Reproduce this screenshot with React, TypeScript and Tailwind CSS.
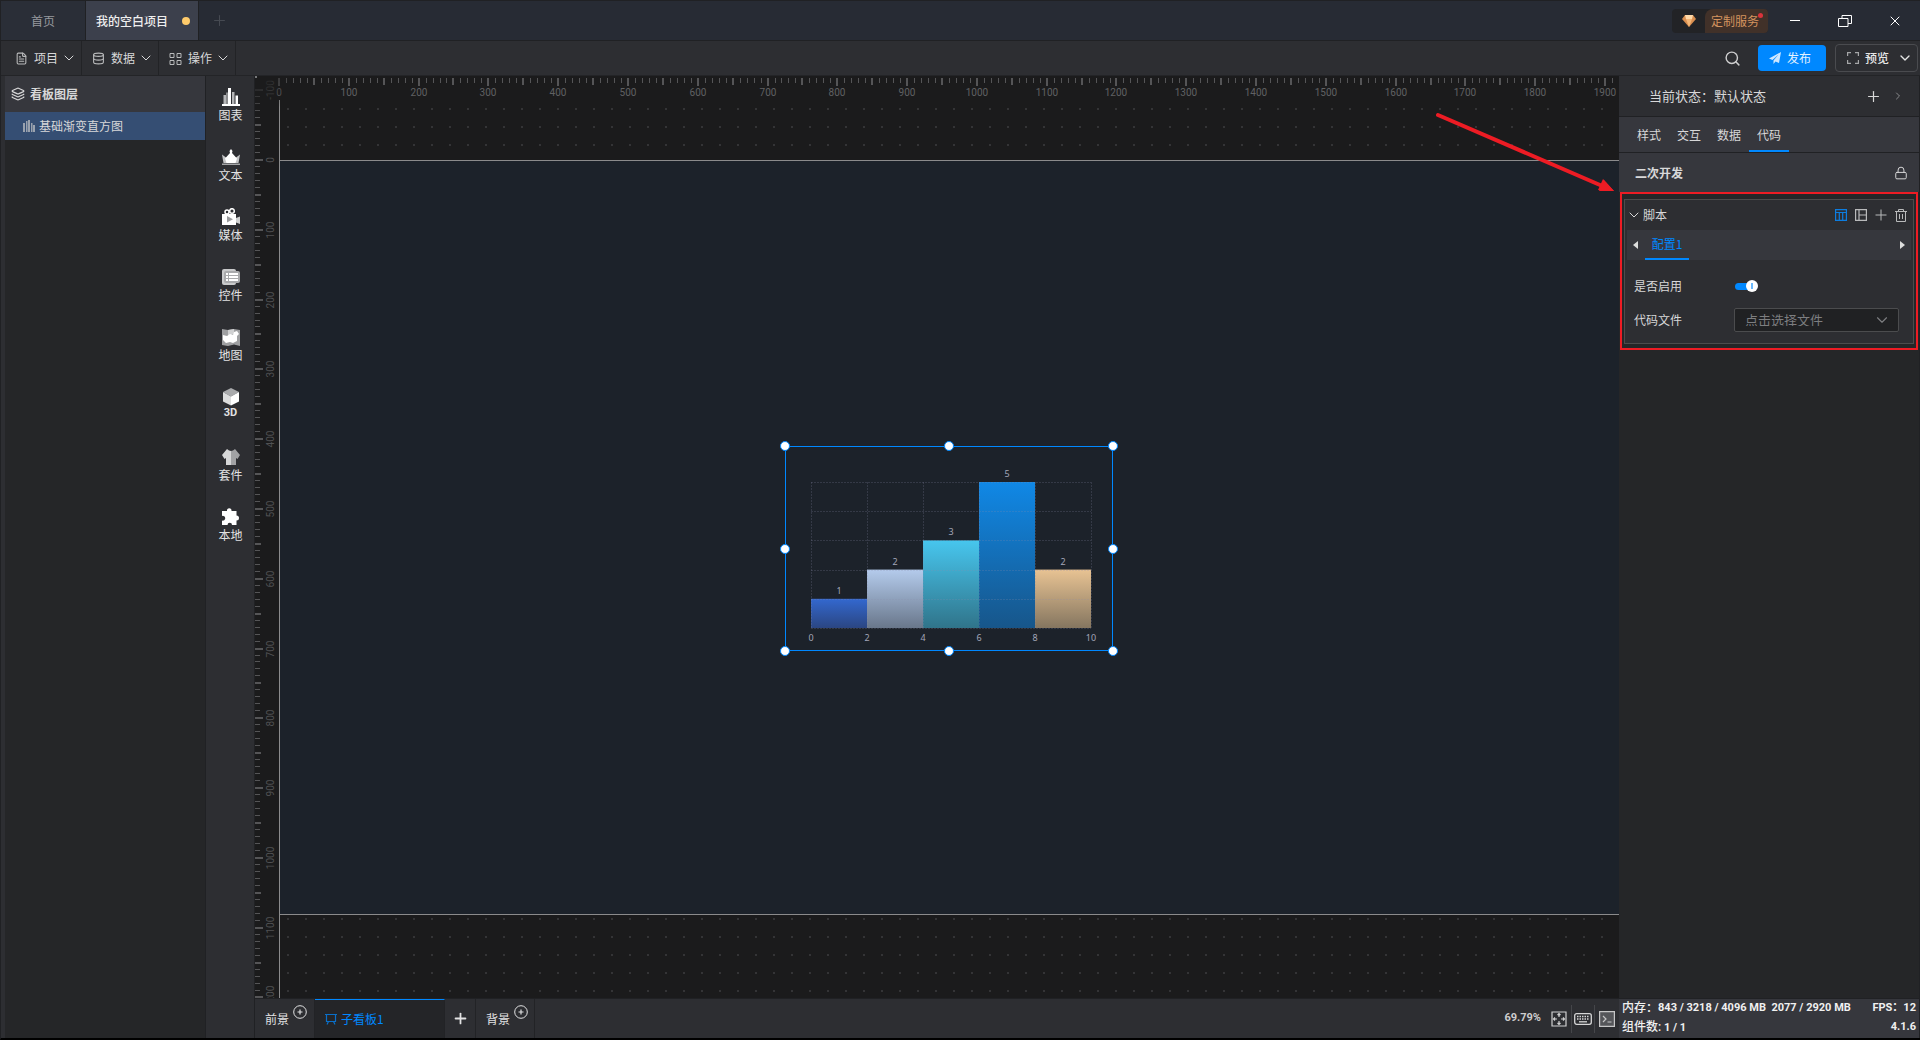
import type { ReactNode } from "react";
import { ChevronDown, ChevronRight, Database, FileText, Layers, Lock, Plus, Search, X } from "lucide-react";

const SCALE = 0.6979;

const menus = [
  { label: "项目", icon: <FileText size={13} strokeWidth={2} /> },
  { label: "数据", icon: <Database size={13} strokeWidth={2} /> },
  { label: "操作", icon: <GridIcon /> },
];

const tools: { label: string; icon: ReactNode }[] = [
  {
    label: "图表",
    icon: (
      <>
        <path d="M1.5 7h2.500v9h-2.500zM10 4h2.500v12h-2.500z" fill="#b5b6b8" />
        <path d="M4 4.500h2v11.500h-2z" fill="#8a8b8d" />
        <path d="M6 0h3v16h-3zM13.500 7.500h2.500v8.500h-2.500zM0 16h18v2h-18z" fill="#fff" />
      </>
    ),
  },
  {
    label: "文本",
    icon: (
      <>
        <path d="M0 6.500l6 4.500v4h-4.500zM18 6.500l-6 4.500v4h4.500z" fill="#c4c5c7" />
        <path d="M9 1l1.500 2-.5 2 5 5.500-1.500 4.500h-9l-1.500-4.500 5-5.500-.5-2z" fill="#fff" />
        <path d="M0 15.500h18v1.500h-18z" fill="#a4a5a7" />
      </>
    ),
  },
  {
    label: "媒体",
    icon: (
      <>
        <circle cx="5" cy="4" r="2" fill="none" stroke="#fff" strokeWidth="1.500" />
        <circle cx="10" cy="3" r="2.300" fill="none" stroke="#fff" strokeWidth="1.500" />
        <path d="M0 6h14v11h-14z" fill="#fff" />
        <path d="M14 10l4-1.500v7.500l-4-1.500z" fill="#cfd0d1" />
        <path d="M5 8l6 3.300-6 3.200z" fill="#9b9c9e" />
      </>
    ),
  },
  {
    label: "控件",
    icon: (
      <>
        <rect x="0" y="1" width="14" height="16" rx="2" fill="#c9cacb" />
        <rect x="2" y="3" width="16" height="12" rx="2" fill="#a9aaac" />
        <path d="M4 5h2v2h-2zM7 5h9v2h-9zM4 8h2v2h-2zM7 8h9v2h-9zM4 11h2v2h-2zM7 11h9v2h-9z" fill="#fff" />
      </>
    ),
  },
  {
    label: "地图",
    icon: (
      <>
        <path d="M0 1l6 1 6-1 6 1v16l-6-1.500-6 1.500-6-1z" fill="#9fa0a2" />
        <path d="M6 2l6-1v5l-6 2z" fill="#d0d1d2" />
        <path d="M1 7l4 1 3-2 3 1 1-3 3-1 2 3-2 2v5l-4 2-3-1-4 1-3-3z" fill="#fff" />
      </>
    ),
  },
  {
    label: "3D",
    icon: (
      <>
        <path d="M9 0l8 4-8 4.500-8-4.500z" fill="#a9aaac" />
        <path d="M1 4l8 4.500v9l-8-4z" fill="#dcdddd" />
        <path d="M17 4l-8 4.500v9l8-4z" fill="#fff" />
      </>
    ),
  },
  {
    label: "套件",
    icon: (
      <>
        <path d="M5 1q2 2 4 2v14h-5v-7l-1.500 1-2.500-4z" fill="#d6d7d8" />
        <path d="M13 1q-2 2-4 2v14h5v-7l1.500 1 2.500-4z" fill="#a1a2a4" />
      </>
    ),
  },
  {
    label: "本地",
    icon: (
      <path
        d="M0 3h5a2.300 2.300 0 1 1 4.500 0h5v4.500a2.400 2.400 0 1 1 0 5v4.500h-4.500a2.200 2.200 0 1 0-4.500 0h-5.500v-4.500a2.400 2.400 0 1 0 0-4.500z"
        fill="#fff"
      />
    ),
  },
];

const bars = [
  { value: 1, from: "#3368cf", to: "#2b4682" },
  { value: 2, from: "#b4cbec", to: "#69778b" },
  { value: 3, from: "#47c6ee", to: "#30748a" },
  { value: 5, from: "#1088e6", to: "#17568a" },
  { value: 2, from: "#e8c393", to: "#857660" },
];

const panelTabs = ["样式", "交互", "数据", "代码"];

function GridIcon() {
  return (
    <svg width="13" height="13" viewBox="0 0 13 13" fill="none" stroke="currentColor">
      <path d="M1 1.500h4v4h-4zM8 1.500h4v4h-4zM1 8.500h4v4h-4zM8 8.500h4v4h-4z" />
    </svg>
  );
}

function TitleBar() {
  return (
    <header className="flex h-10 shrink-0 items-stretch border-b border-[#202124] bg-[#272b34] text-xs">
      <nav className="flex">
        <a href="#home" className="flex w-[85px] items-center justify-center border-r border-[#202124] bg-[#2a2e37] text-[#97999e]">
          首页
        </a>
        <a href="#project" className="flex w-[113px] items-center justify-between border-r border-[#202124] bg-[#3c404c] pr-2 pl-[10px] font-medium text-[#eeeeee]">
          我的空白项目
          <span className="size-2 rounded-full bg-[#ffcb6b]" />
        </a>
      </nav>
      <button type="button" aria-label="新建" className="px-3 text-[#464a52]">
        <Plus size={17} strokeWidth={1.5} />
      </button>
      <div className="ml-auto flex items-center">
        <a href="#service" className="relative flex h-6 items-stretch overflow-hidden rounded-sm bg-[#222326] text-[#d4935f]">
          <span className="flex w-[33px] items-center justify-center">
            <svg width="14" height="12" viewBox="0 0 14 12">
              <path d="M3 0h8l3 4-7 8-7-8z" fill="#d98f50" />
              <path d="M3 0h8l-1 4h-6z" fill="#ffd9a8" />
              <path d="M4 4h6l-3 8z" fill="#f5b777" />
            </svg>
          </span>
          <span className="flex w-[63px] items-center rounded-tl-lg bg-[#413129] pl-[6px]">定制服务</span>
          <span className="absolute top-1 right-[5px] size-[5px] rounded-full bg-[#d9333b]" />
        </a>
        <button type="button" aria-label="最小化" className="ml-[22px] flex w-[10px] justify-center">
          <span className="h-px w-full bg-white" />
        </button>
        <button type="button" aria-label="还原" className="ml-[38px] text-white">
          <svg width="14" height="12" viewBox="0 0 14 12" fill="none" stroke="currentColor">
            <path d="M.5 3.500h9.500v8h-9.500zM4 3.500v-3h9.500v8h-3.500" />
          </svg>
        </button>
        <button type="button" aria-label="关闭" className="mr-[17px] ml-[35px] text-white">
          <X size={16} strokeWidth={1.5} />
        </button>
      </div>
    </header>
  );
}

function MenuBar() {
  return (
    <div className="flex h-[35px] shrink-0 items-stretch border-b border-[#232427] bg-[#2d2e32] pl-1 text-xs text-[#d8d8d9]">
      {menus.map((menu) => (
        <button key={menu.label} type="button" className="flex w-[77px] items-center border-r border-[#222326] pl-[10px]">
          <span className="text-[#b9babb]">{menu.icon}</span>
          <span className="ml-[6px]">{menu.label}</span>
          <ChevronDown size={16} strokeWidth={1.5} className="ml-[3px]" />
        </button>
      ))}
      <div className="ml-auto flex items-center pr-[2px]">
        <button type="button" aria-label="搜索" className="mr-[17px] text-[#cfcfd0]">
          <Search size={17} strokeWidth={2} />
        </button>
        <button type="button" className="mr-[9px] flex h-[26px] items-center rounded-sm bg-[#0088ff] pr-[15px] pl-[11px] text-[#e4f2ff]">
          <svg width="12" height="12" viewBox="0 0 12 12" className="mr-[6px]">
            <path d="M0 6.500l12-6.500-2 11-3.500-1.500-2 2.500v-3.500l5-6-6 5.500z" fill="#cfe7ff" />
          </svg>
          发布
        </button>
        <button type="button" className="flex h-7 items-center rounded border border-[#4a4b4f] pr-1 pl-[11px] font-medium text-[#e6e6e6]">
          <svg width="12" height="12" viewBox="0 0 12 12" fill="none" stroke="#a5a6a8" strokeWidth="1.200" className="mr-[6px]">
            <path d="M.6 4v-3.400h3.400M8 .6h3.400v3.400M11.400 8v3.400h-3.400M4 11.400h-3.400v-3.400" />
          </svg>
          预览
          <ChevronDown size={16} strokeWidth={2} className="ml-2" />
        </button>
      </div>
    </div>
  );
}

function LayerPanel() {
  return (
    <aside className="ml-1 flex w-[201px] shrink-0 flex-col border-r border-[#202124] bg-[#252628] text-xs text-[#d8d8d9]">
      <h2 className="flex h-9 items-center gap-[5px] bg-[#36373d] pl-[6px] font-bold">
        <Layers size={14} strokeWidth={2} />
        看板图层
      </h2>
      <a href="#layer" className="flex h-7 items-center gap-1 bg-[#354e73] pl-[18px]">
        <svg width="12" height="12" viewBox="0 0 12 12" fill="#9aa2ae">
          <path d="M0 3h2v9h-2zM3 1h1.500v11h-1.500zM5 0h2v12h-2zM8 3h1.500v9h-1.500zM10 5h2v7h-2z" />
        </svg>
        基础渐变直方图
      </a>
    </aside>
  );
}

function ToolColumn() {
  return (
    <nav className="flex w-[49px] shrink-0 flex-col border-r border-[#202124] bg-[#2d2e32] pt-3 pl-px text-xs text-[#e2e2e3]">
      {tools.map((tool) => (
        <button key={tool.label} type="button" className="flex h-15 flex-col items-center">
          <svg width="18" height="18" viewBox="0 0 18 18">
            {tool.icon}
          </svg>
          {tool.label === "3D" ? (
            <span className="font-['Roboto',sans-serif] text-[11px] leading-[14px] font-bold">{tool.label}</span>
          ) : (
            <span className="leading-[18px]">{tool.label}</span>
          )}
        </button>
      ))}
    </nav>
  );
}

// Tick positions every 10 board units, labelled every 100.
function Rulers() {
  const across = Array.from({ length: 193 }, (_, i) => i * 10);
  const down = Array.from({ length: 131 }, (_, i) => (i - 10) * 10);
  const x = (v: number) => Math.round(24 + v * SCALE);
  const y = (v: number) => Math.round(84 + v * SCALE);
  return (
    <svg className="absolute inset-0 size-full font-['Roboto',sans-serif] text-[10px]" aria-hidden="true">
      <defs>
        <radialGradient id="corner">
          <stop offset="0.3" stopColor="#1b1b1c" stopOpacity="0.8" />
          <stop offset="1" stopColor="#1b1b1c" stopOpacity="0" />
        </radialGradient>
      </defs>
      <g fill="#555557">
        {across.map((v) => (
          <rect
            key={v}
            x={x(v) - (v % 50 ? 0 : 1)}
            y={2}
            width={v % 50 ? 1 : 2}
            height={v % 100 === 0 ? 8 : v % 50 === 0 ? 7 : 5}
          />
        ))}
        {down.map((v) => (
          <rect key={v} x={0} y={y(v) - 1} width={v % 100 === 0 ? 8 : v % 50 === 0 ? 6 : 5} height={v % 50 ? 1 : 2} />
        ))}
      </g>
      <g fill="#606163" textAnchor="middle">
        {across
          .filter((v) => v % 100 === 0)
          .map((v) => (
            <text key={v} x={x(v)} y={20}>
              {v}
            </text>
          ))}
        {down
          .filter((v) => v % 100 === 0 && v <= 1200)
          .map((v) => (
            <text key={v} transform={`translate(19 ${y(v)}) rotate(-90)`} fill="#505153">
              {v}
            </text>
          ))}
      </g>
      <circle cx="0" cy="0" r="40" fill="url(#corner)" />
      <path d="M0 0h2v2h-2z" fill="#77787a" />
    </svg>
  );
}

function Histogram() {
  const left = 26;
  const top = 36;
  const bottom = 182;
  const colWidth = 56;
  const unit = (bottom - top) / 5;
  return (
    <svg width="328" height="205" viewBox="0 0 328 205" role="img" className="block font-['Noto_Sans',sans-serif] text-[9px]">
      <defs>
        {bars.map((bar, i) => (
          <linearGradient key={i} id={`bar${i}`} x1="0" y1="0" x2="0" y2="1">
            <stop offset="0" stopColor={bar.from} />
            <stop offset="1" stopColor={bar.to} />
          </linearGradient>
        ))}
      </defs>
      {bars.map((bar, i) => (
        <rect
          key={i}
          x={left + i * colWidth}
          y={bottom - bar.value * unit}
          width={colWidth}
          height={bar.value * unit}
          fill={`url(#bar${i})`}
        />
      ))}
      <g stroke="#8f8fae" strokeOpacity="0.220" strokeDasharray="2 1">
        {[0, 1, 2, 3, 4, 5].map((i) => (
          <path key={i} d={`M${left} ${Math.round(bottom - i * unit) + 0.5}h280M${left + i * colWidth + 0.5} ${top}v146`} />
        ))}
      </g>
      <g fill="#a3a6b8" textAnchor="middle">
        {bars.map((bar, i) => (
          <text key={i} x={left + (i + 0.5) * colWidth} y={bottom - bar.value * unit - 5}>
            {bar.value}
          </text>
        ))}
        {[0, 2, 4, 6, 8, 10].map((v, i) => (
          <text key={v} x={left + i * colWidth} y={bottom + 13}>
            {v}
          </text>
        ))}
      </g>
      <rect x="0.5" y="0.5" width="327" height="204" fill="none" stroke="#0088ff" />
    </svg>
  );
}

function Handle({ className }: { className: string }) {
  return (
    <span className={`absolute size-[10px] -translate-x-1/2 -translate-y-1/2 rounded-full border border-[#0088ff] bg-white ${className}`} />
  );
}

function Canvas() {
  return (
    <main className="relative flex-1 overflow-hidden bg-[#1b1b1c]">
      <div className="absolute top-6 right-0 bottom-0 left-6 border-l border-[#8b8b8c] bg-[radial-gradient(circle,#343436_1px,transparent_1.5px)] bg-[size:18px_18px] bg-[position:-1px_0px]" />
      <div className="absolute top-[84px] left-6 h-[755px] w-[1340px] border-y border-l border-[#8b8b8c] bg-[#1c222a]">
        <div className="absolute top-[285px] left-[505px]">
          <Histogram />
          <Handle className="top-0 left-0" />
          <Handle className="top-0 left-1/2" />
          <Handle className="top-0 left-full" />
          <Handle className="top-1/2 left-0" />
          <Handle className="top-1/2 left-full" />
          <Handle className="top-full left-0" />
          <Handle className="top-full left-1/2" />
          <Handle className="top-full left-full" />
        </div>
      </div>
      <Rulers />
      <svg width="182" height="82" viewBox="0 0 182 82" className="absolute top-9 right-[3px]">
        <path d="M4 3L166 73" stroke="#ed1c24" strokeWidth="4" strokeLinecap="round" />
        <path d="M180 79l-16-1 5-11z" fill="#ed1c24" />
        <path d="M180 79l-10-11-5 11z" fill="#ed1c24" />
      </svg>
    </main>
  );
}

function CirclePlus() {
  return (
    <svg width="14" height="14" viewBox="0 0 14 14" fill="none" stroke="currentColor" className="-mt-[14px]">
      <circle cx="7" cy="7" r="6.300" />
      <path d="M7 4.500v5M4.500 7h5" strokeWidth="1.200" />
    </svg>
  );
}

function BoardTabs() {
  return (
    <footer className="flex h-10 shrink-0 items-stretch border-t border-[#202124] bg-[#2d2e32] text-xs text-[#e2e2e3]">
      <button type="button" className="flex w-15 items-center gap-1 border-r border-[#222326] pl-[10px]">
        前景
        <CirclePlus />
      </button>
      <button type="button" className="flex w-[130px] items-center gap-1 border-t border-r border-t-[#0088ff] border-r-[#222326] bg-[#242528] pl-[10px] text-[#0088ff]">
        <svg width="12" height="12" viewBox="0 0 12 12" fill="none" stroke="#0a6fc8" strokeWidth="1.200">
          <path d="M0 1.500h12M1.500 1.500v7h9v-7M3.500 8.500l-1.500 3M8.500 8.500l1.500 3" />
        </svg>
        子看板1
      </button>
      <button type="button" aria-label="添加看板" className="flex w-[31px] items-center justify-center border-r border-[#222326]">
        <Plus size={17} strokeWidth={2.5} />
      </button>
      <button type="button" className="flex w-[59px] items-center gap-1 border-r border-[#222326] pl-[10px]">
        背景
        <CirclePlus />
      </button>
      <div className="ml-auto flex items-center pr-1">
        <span className="mr-[10px] font-['Roboto',sans-serif] text-[11px] font-bold text-[#cdcdce]">69.79%</span>
        <button type="button" aria-label="适应画布">
          <svg width="16" height="16" viewBox="0 0 16 16" fill="none" stroke="#d0d0d1" strokeWidth="1.200">
            <path d="M1 1h14v14h-14z" />
            <path d="M8 2.500v3.500M8 10v3.500M2.500 8h3.500M10 8h3.500M6.500 4l1.500-1.500 1.500 1.500M6.500 12l1.500 1.500 1.500-1.500M4 6.500l-1.500 1.500 1.500 1.500M12 6.500l1.500 1.500-1.500 1.500" />
          </svg>
        </button>
        <span className="ml-1 h-7 w-px bg-[#45464a]" />
        <button type="button" aria-label="快捷键" className="mx-[2px]">
          <svg width="18" height="12" viewBox="0 0 18 12" fill="none" stroke="#d6d6d7" strokeWidth="1.300">
            <rect x="0.700" y="0.700" width="16.600" height="10.600" rx="2" />
            <path d="M3 3.500h12M3 6h12" strokeDasharray="1.500 1" />
            <path d="M5 8.800h8" />
          </svg>
        </button>
        <span className="mr-1 h-7 w-px bg-[#45464a]" />
        <button type="button" aria-label="控制台">
          <svg width="16" height="16" viewBox="0 0 16 16" fill="#55565a" stroke="#c6c6c7" strokeWidth="1.200">
            <path d="M.6 .6h14.800v14.800h-14.800z" />
            <path d="M4 5l3 3-3 3M8.500 11h4" fill="none" />
          </svg>
        </button>
      </div>
    </footer>
  );
}

function ScriptCard() {
  return (
    <section className="mx-px border-2 border-[#ed1c24] p-[5px_2px_4px]">
      <div className="border border-[#4c4c4c] bg-[#2d2e32] px-[2px] pb-[11px]">
        <div className="flex h-[30px] items-center pr-1">
          <ChevronDown size={16} strokeWidth={1.5} className="-ml-px" />
          <h3 className="ml-px flex-1">脚本</h3>
          <div className="flex items-center gap-2 text-[#b9babb]">
            <button type="button" aria-label="表格" className="text-[#0d7de0]">
              <svg width="12" height="12" viewBox="0 0 12 12" fill="none" stroke="currentColor" strokeWidth="1.200">
                <path d="M.6 .6h10.800v10.800h-10.800zM.6 3.500h10.800M4.300 3.500v8M7.700 3.500v8" />
              </svg>
            </button>
            <button type="button" aria-label="布局">
              <svg width="12" height="12" viewBox="0 0 12 12" fill="none" stroke="currentColor" strokeWidth="1.200">
                <path d="M.6 .6h10.800v10.800h-10.800zM4 .6v10.800M4 6h7.500" />
              </svg>
            </button>
            <button type="button" aria-label="添加">
              <svg width="12" height="12" viewBox="0 0 12 12" stroke="currentColor">
                <path d="M6 .5v11M.5 6h11" />
              </svg>
            </button>
            <button type="button" aria-label="删除">
              <svg width="12" height="13" viewBox="0 0 12 13" fill="none" stroke="currentColor">
                <path d="M0 2.500h12M3.500 2.500v-2h5v2M1.500 2.500v10h9v-10M4.500 5v5M7.500 5v5" />
              </svg>
            </button>
          </div>
        </div>
        <div className="flex h-[30px] items-center bg-[#36373d] px-[6px]">
          <button type="button" aria-label="上一个">
            <svg width="5" height="8" viewBox="0 0 5 8" fill="#dddddd">
              <path d="M5 0v8l-5-4z" />
            </svg>
          </button>
          <button type="button" className="ml-[7px] h-full w-11 border-b-2 border-[#0088ff] text-[#0088ff]">
            配置1
          </button>
          <button type="button" aria-label="下一个" className="ml-auto">
            <svg width="5" height="8" viewBox="0 0 5 8" fill="#dddddd">
              <path d="M0 0v8l5-4z" />
            </svg>
          </button>
        </div>
        <div className="mt-[14px] flex h-6 items-center pl-[7px]">
          <label htmlFor="enabled" className="w-[101px]">
            是否启用
          </label>
          <span className="relative flex items-center">
            <input
              id="enabled"
              type="checkbox"
              defaultChecked
              className="h-[7px] w-5 appearance-none rounded-full bg-[#0088ff]"
            />
            <span className="pointer-events-none absolute left-[11px] flex size-3 items-center justify-center rounded-full bg-white">
              <span className="h-[6px] w-[2px] bg-[#6bb8fb]" />
            </span>
          </span>
        </div>
        <div className="mt-[10px] flex h-6 items-center pr-3 pl-[7px]">
          <label htmlFor="file" className="w-[100px]">
            代码文件
          </label>
          <span className="relative flex flex-1 items-center">
            <select
              id="file"
              className="h-6 w-full appearance-none rounded-xs border border-[#4b4c4e] bg-[#202123] px-[10px] pb-px text-[13px] leading-none text-[#7d7e80]"
            >
              <option>点击选择文件</option>
            </select>
            <ChevronDown size={18} strokeWidth={1.5} className="pointer-events-none absolute right-2 text-[#7d7e80]" />
          </span>
        </div>
      </div>
    </section>
  );
}

function PropertyPanel() {
  return (
    <aside className="flex w-[301px] shrink-0 flex-col border-r border-[#202124] bg-[#252628] text-xs text-[#d8d8d9]">
      <div className="flex h-[41px] items-center border-b border-[#202124] bg-[#2d2e32] pr-[15px] pl-[30px] text-[13px]">
        <span className="flex-1">当前状态：默认状态</span>
        <button type="button" aria-label="添加状态">
          <Plus size={17} strokeWidth={1.7} />
        </button>
        <button type="button" aria-label="展开" className="ml-[10px] text-[#8a8b8d]">
          <ChevronRight size={12} />
        </button>
      </div>
      <div className="flex h-9 items-stretch border-b border-[#202124] bg-[#36373d] pl-[10px]">
        {panelTabs.map((tab) => (
          <button
            key={tab}
            type="button"
            className={tab === "代码" ? "w-10 border-b-2 border-[#0088ff] pt-[2px]" : "w-10"}
          >
            {tab}
          </button>
        ))}
      </div>
      <div className="flex h-[39px] items-center justify-between bg-[#36373d] pr-[11px] pl-4">
        <h2 className="font-bold">二次开发</h2>
        <button type="button" aria-label="锁定">
          <Lock size={14} strokeWidth={1.7} />
        </button>
      </div>
      <ScriptCard />
      <div className="mt-auto flex h-10 flex-col justify-between border-t border-[#202124] bg-[#36373d] px-[3px] pb-[1px] font-['Roboto','Noto_Sans_CJK_SC',sans-serif] text-[11px] leading-[18px] font-bold text-[#f0f0f0]">
        <p className="flex whitespace-pre">
          <span className="text-xs leading-[18px] font-medium">内存：</span>
          <span>843 / 3218 / 4096 MB  2077 / 2920 MB</span>
          <span className="ml-auto">FPS：12</span>
        </p>
        <p className="flex justify-between">
          <span>
            <span className="text-xs leading-[18px] font-medium">组件数:</span> 1 / 1
          </span>
          <span>4.1.6</span>
        </p>
      </div>
    </aside>
  );
}

export default function App() {
  return (
    <div className="flex h-screen flex-col overflow-hidden border-t border-l border-t-[#202124] border-l-[#202124] border-b-2 border-b-black bg-[#2d2e32] font-['Noto_Sans_CJK_SC',sans-serif]">
      <TitleBar />
      <MenuBar />
      <div className="flex min-h-0 flex-1">
        <LayerPanel />
        <ToolColumn />
        <div className="flex min-w-0 flex-1 flex-col">
          <Canvas />
          <BoardTabs />
        </div>
        <PropertyPanel />
      </div>
    </div>
  );
}
